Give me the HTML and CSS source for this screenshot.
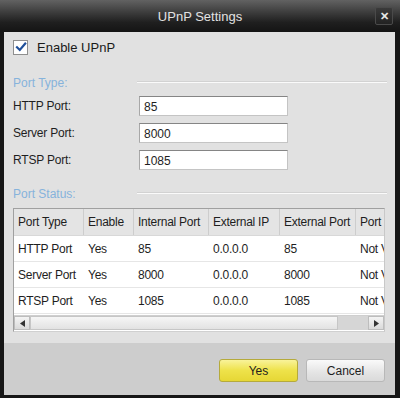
FILE: index.html
```html
<!DOCTYPE html>
<html>
<head>
<meta charset="utf-8">
<link rel="stylesheet" href="styles.css">
</head>
<body>
<div class="dialog">
  <div class="titlebar">
    <span class="title">UPnP Settings</span>
    <span class="close">&#x2715;</span>
  </div>
  <div class="main">
    <label class="enable">
      <span class="checkbox"><svg width="12" height="12" viewBox="0 0 12 12"><path d="M2 6.2 L4.8 9 L10.2 2.6" fill="none" stroke="#1f4f9a" stroke-width="2.2" stroke-linecap="square"/></svg></span>
      <span>Enable UPnP</span>
    </label>
    <div class="section"><span class="sec-title">Port Type:</span><span class="sec-line"></span></div>
    <div class="form">
      <span class="flabel">HTTP Port:</span><span class="input">85</span>
      <span class="flabel">Server Port:</span><span class="input">8000</span>
      <span class="flabel">RTSP Port:</span><span class="input">1085</span>
    </div>
    <div class="section status"><span class="sec-title">Port Status:</span><span class="sec-line"></span></div>
    <div class="table">
      <div class="row head">
        <span class="c1">Port Type</span><span class="c2">Enable</span><span class="c3">Internal Port</span><span class="c4">External IP</span><span class="c5">External Port</span><span class="c6">Port</span>
      </div>
      <div class="row">
        <span class="c1">HTTP Port</span><span class="c2">Yes</span><span class="c3">85</span><span class="c4">0.0.0.0</span><span class="c5">85</span><span class="c6">Not V</span>
      </div>
      <div class="row">
        <span class="c1">Server Port</span><span class="c2">Yes</span><span class="c3">8000</span><span class="c4">0.0.0.0</span><span class="c5">8000</span><span class="c6">Not V</span>
      </div>
      <div class="row">
        <span class="c1">RTSP Port</span><span class="c2">Yes</span><span class="c3">1085</span><span class="c4">0.0.0.0</span><span class="c5">1085</span><span class="c6">Not V</span>
      </div>
      <div class="scrollbar">
        <span class="sbtn"><svg width="5" height="7" viewBox="0 0 5 7"><path d="M5 0 L0 3.5 L5 7Z" fill="#333"/></svg></span>
        <span class="thumb"></span>
        <span class="track"></span>
        <span class="sbtn"><svg width="5" height="7" viewBox="0 0 5 7"><path d="M0 0 L5 3.5 L0 7Z" fill="#333"/></svg></span>
      </div>
    </div>
  </div>
  <div class="footer">
    <button class="btn yes">Yes</button>
    <button class="btn cancel">Cancel</button>
  </div>
</div>
</body>
</html>
```
FILE: styles.css
```css
* { box-sizing: border-box; }
html, body { margin: 0; padding: 0; }
body {
  width: 400px;
  height: 398px;
  background: #1a1a1a;
  font-family: "Liberation Sans", Arial, sans-serif;
  font-size: 12px;
  color: #1e1e1e;
}
.dialog {
  width: 400px;
  height: 398px;
  display: flex;
  flex-direction: column;
  background: #161616;
  padding: 0 5px 3px 4px;
}
.titlebar {
  height: 32px;
  margin: 0 -5px 0 -4px;
  background: linear-gradient(#626262 0%, #404040 35%, #1f1f1f 70%, #141414 100%);
  position: relative;
  display: flex;
  align-items: center;
  justify-content: center;
}
.title {
  color: #e2e2e2;
  font-size: 13px;
  margin-top: 1px;
}
.close {
  position: absolute;
  right: 7px;
  top: 7px;
  width: 18px;
  height: 18px;
  background: linear-gradient(#3a3a3a, #222);
  border: 1px solid #4a4a4a;
  border-radius: 2px;
  color: #e8e8e8;
  font-size: 11px;
  font-weight: bold;
  display: flex;
  align-items: center;
  justify-content: center;
}
.main {
  height: 311px;
  background: #e1e1e1;
  padding: 8px 8px 0 9px;
  display: flex;
  flex-direction: column;
}
.enable {
  display: flex;
  align-items: center;
  gap: 9px;
  font-size: 13px;
  height: 14px;
  color: #1a1a1a;
}
.checkbox {
  width: 15px;
  height: 15px;
  background: #fff;
  border: 1px solid #8f8f8f;
  display: flex;
  align-items: center;
  justify-content: center;
}
.section {
  display: flex;
  align-items: center;
  margin-top: 22px;
  height: 14px;
}
.sec-title {
  color: #86b3dc;
  font-size: 12px;
  width: 124px;
}
.sec-line {
  flex: 1;
  background: #fafafa;
  border-top: 1px solid #d2d2d2;
  margin-top: -2px;
  height: 2px;
}
.form {
  display: grid;
  grid-template-columns: 126px 149px;
  row-gap: 7px;
  margin-top: 6px;
  align-items: center;
}
.flabel { font-size: 12px; letter-spacing: -0.2px; }
.input {
  height: 20px;
  background: #fff;
  border: 1px solid #c4c4c4;
  border-top-color: #858585;
  border-left-color: #a8a8a8;
  padding: 3px 4px 0;
  font-size: 12px;
}
.status { margin-top: 17px; }
.table {
  margin-top: 7px;
  width: 372px;
  height: 124px;
  background: #fff;
  border: 1px solid #a0a0a0;
  border-bottom-color: #d0d0d0;
  border-right-color: #c8c8c8;
  display: flex;
  flex-direction: column;
  overflow: hidden;
  letter-spacing: -0.25px;
}
.row {
  display: flex;
  height: 26px;
  align-items: center;
  border-bottom: 1px solid #e6e6e6;
  white-space: nowrap;
}
.row span {
  padding-left: 4px;
  overflow: hidden;
  height: 100%;
  display: flex;
  align-items: center;
}
.row.head {
  height: 27px;
  background: #e4e4e4;
  border-bottom: 1px solid #d8d8d8;
}
.row.head span { border-right: 1px solid #cdcdcd; padding-left: 4px; }
.c1 { width: 70px; }
.c2 { width: 50px; }
.c3 { width: 75px; }
.c4 { width: 71px; }
.c5 { width: 76px; }
.c6 { width: 28px; border-right: none !important; }
.scrollbar {
  margin-top: 1px;
  height: 15px;
  display: flex;
  background: #d6d6d6;
  border-top: 1px solid #cfcfcf;
}
.sbtn {
  width: 16px;
  height: 14px;
  background: linear-gradient(#f4f4f4, #dadada);
  border: 1px solid #bdbdbd;
  display: flex;
  align-items: center;
  justify-content: center;
}
.thumb {
  width: 308px;
  height: 14px;
  background: linear-gradient(#f6f6f6, #e2e2e2);
  border: 1px solid #c6c6c6;
}
.track { flex: 1; }
.footer {
  flex: 1;
  background: #cdcdcd;
  display: flex;
  justify-content: flex-end;
  align-items: flex-start;
  gap: 8px;
  padding: 16px 10px 0 0;
}
.btn {
  width: 79px;
  height: 23px;
  font-family: "Liberation Sans", Arial, sans-serif;
  font-size: 12px;
  color: #1e1e1e;
  border-radius: 3px;
  padding: 0;
}
.yes {
  background: linear-gradient(#f9f39a, #eee24a 50%, #e6d735);
  border: 1px solid #b5aa3c;
}
.cancel {
  background: linear-gradient(#fafafa, #e4e4e4 60%, #dadada);
  border: 1px solid #b8b8b8;
}
```
